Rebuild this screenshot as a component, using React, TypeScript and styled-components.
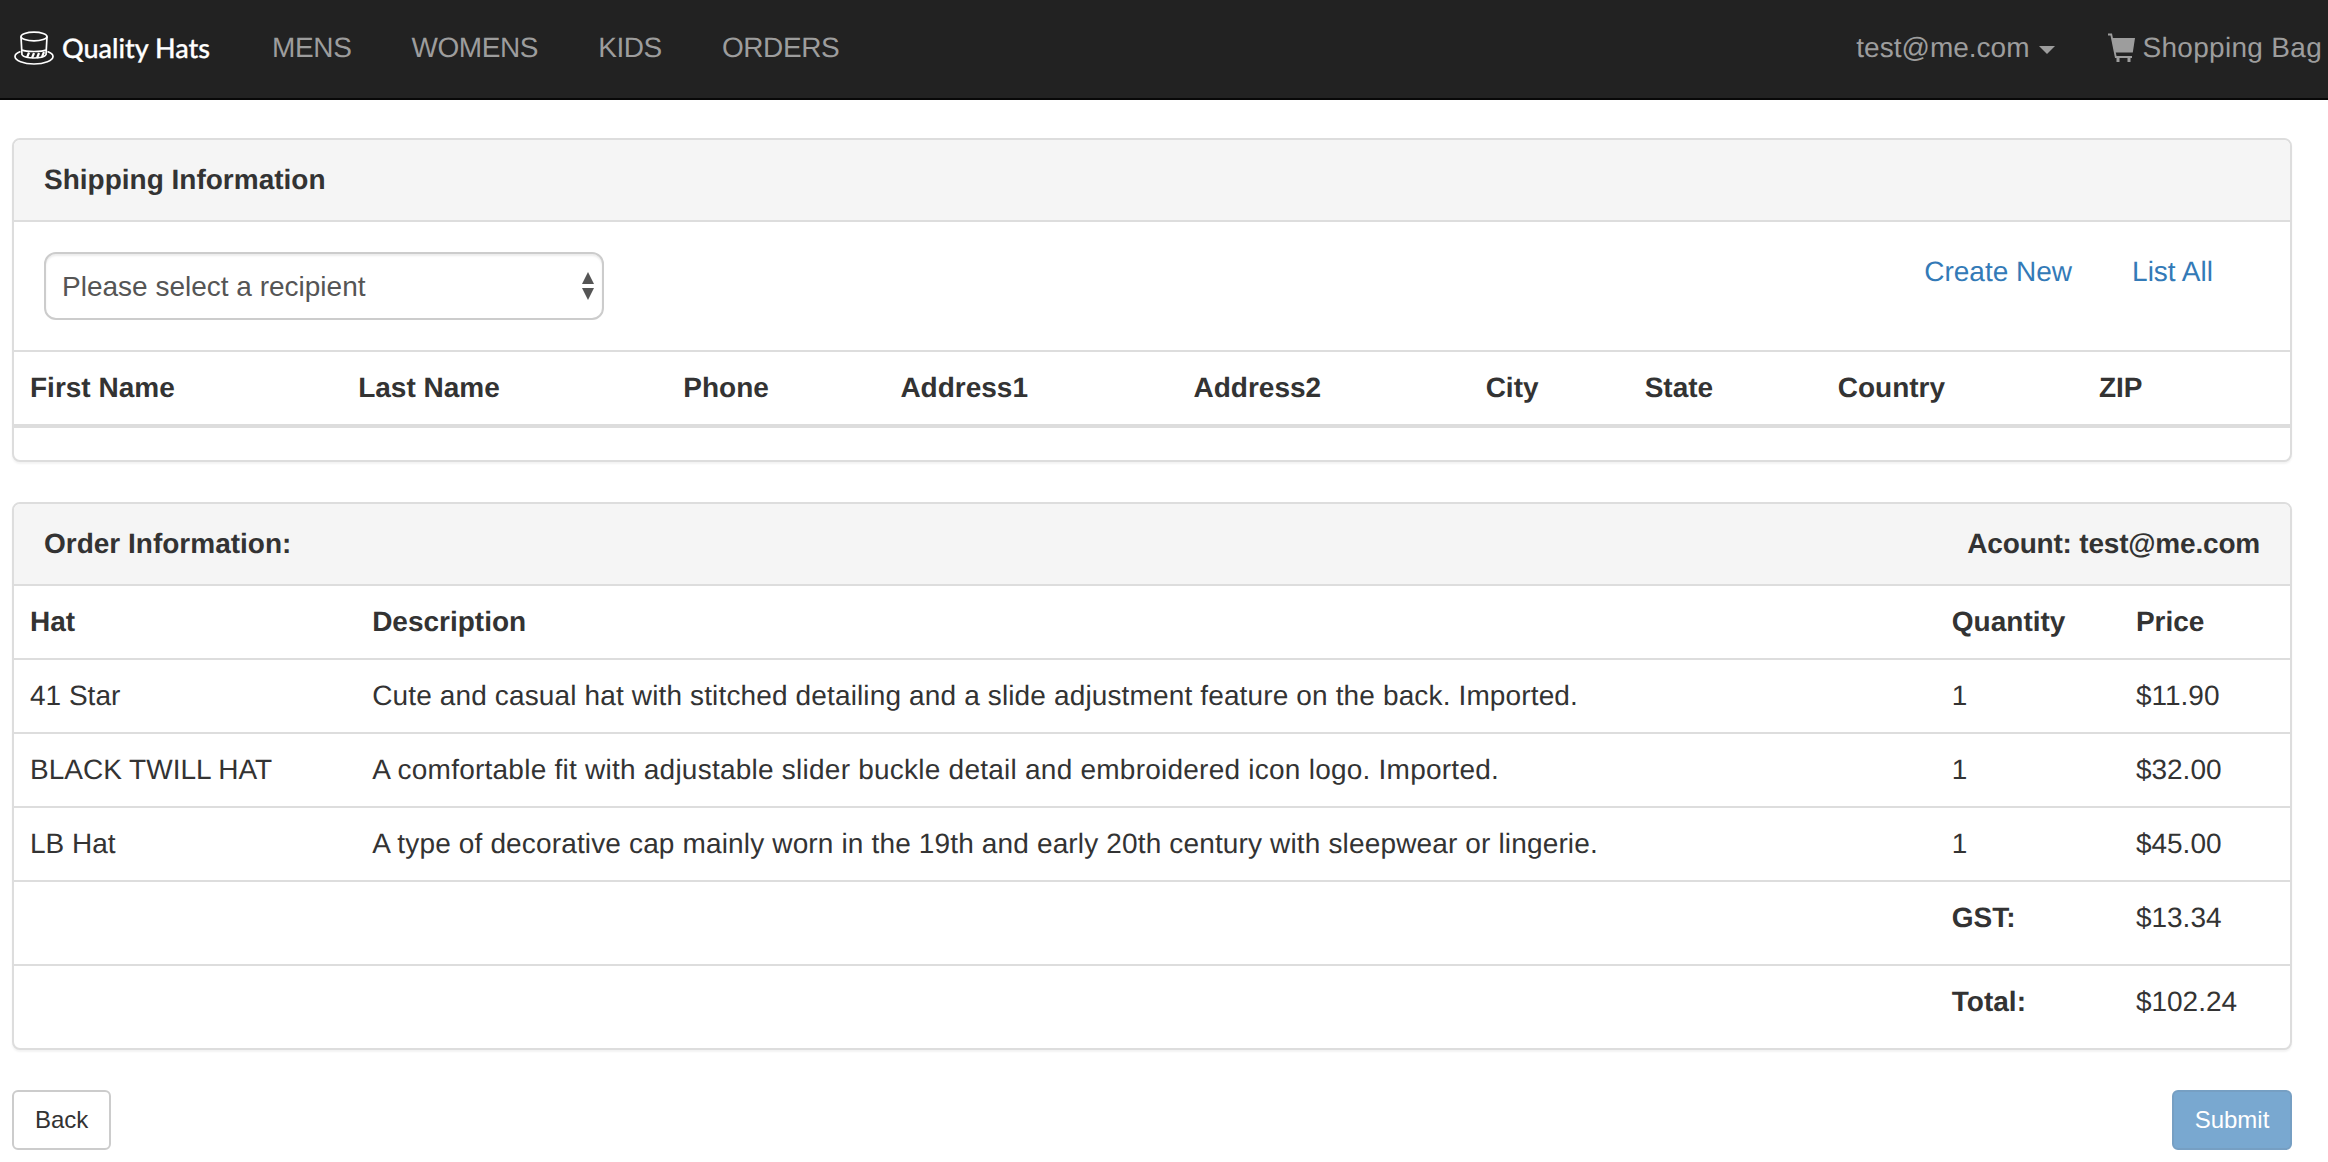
import React from "react";
import styled, { createGlobalStyle } from "styled-components";

const GlobalStyle = createGlobalStyle`
  html, body {
    margin: 0;
    padding: 0;
    background: #fff;
    color: #333;
    font-family: "Liberation Sans", Arial, sans-serif;
    font-size: 28px;
    line-height: 40px;
    text-rendering: geometricPrecision;
  }
  * {
    box-sizing: border-box;
  }
`;

const shippingColumns = [
  { label: "First Name", width: 328 },
  { label: "Last Name", width: 325 },
  { label: "Phone", width: 217 },
  { label: "Address1", width: 293 },
  { label: "Address2", width: 292 },
  { label: "City", width: 159 },
  { label: "State", width: 193 },
  { label: "Country", width: 261 },
  { label: "ZIP", width: 207 },
];

const orderColumns = [
  { label: "Hat", width: 342 },
  { label: "Description", width: 1579 },
  { label: "Quantity", width: 184 },
  { label: "Price", width: 170 },
];

const orderItems = [
  {
    hat: "41 Star",
    description:
      "Cute and casual hat with stitched detailing and a slide adjustment feature on the back. Imported.",
    tracking: 0.14,
    quantity: 1,
    price: "$11.90",
  },
  {
    hat: "BLACK TWILL HAT",
    description:
      "A comfortable fit with adjustable slider buckle detail and embroidered icon logo. Imported.",
    tracking: 0.24,
    quantity: 1,
    price: "$32.00",
  },
  {
    hat: "LB Hat",
    description:
      "A type of decorative cap mainly worn in the 19th and early 20th century with sleepwear or lingerie.",
    tracking: 0.15,
    quantity: 1,
    price: "$45.00",
  },
];

const HatIcon = () => (
  <svg width="40" height="34" viewBox="0 0 40 34" fill="none" stroke="#fff" strokeWidth="1.7">
    <path d="M7 5.5 L8 24 M33 5.5 L32 24" />
    <ellipse cx="20" cy="5.5" rx="13" ry="4.3" />
    <path d="M6.5 20.5 C2.5 22 1 23.5 1 25.5 C1 29.5 9.5 33 20 33 C30.5 33 39 29.5 39 25.5 C39 23.5 37.5 22 33.5 20.5" />
    <path d="M8 24 C12 28 28 28 32 24" />
    <path d="M8 19 C12 21 28 21 32 19" />
    <path d="M13 26.5 L15 21.5 M18 27 L20 22 M23 27 L25 22 M28 26 L30 21" strokeWidth="2.2" />
  </svg>
);

const CartIcon = () => (
  <svg width="30" height="30" viewBox="0 0 30 30" fill="#9d9d9d">
    <path d="M1 0.5 H5 L9.5 23 H25 V25 H8 L3.5 2.5 H1 Z" />
    <path d="M4.8 5 H28 L25.8 19.5 H8 Z" />
    <rect x="9.5" y="25" width="3" height="4" />
    <rect x="20.5" y="25" width="3" height="4" />
  </svg>
);

const SelectArrows = () => (
  <svg width="12" height="28" viewBox="0 0 12 28" fill="#555">
    <path d="M6 0 L12 12 H0 Z" />
    <path d="M0 16 H12 L6 28 Z" />
  </svg>
);

export default function App() {
  return (
    <>
      <GlobalStyle />
      <Navbar>
        <Brand>
          <HatIcon />
          <BrandName>Quality Hats</BrandName>
        </Brand>
        <NavLinks>
          <MenuLink>MENS</MenuLink>
          <MenuLink>WOMENS</MenuLink>
          <MenuLink>KIDS</MenuLink>
          <MenuLink>ORDERS</MenuLink>
        </NavLinks>
        <NavRight>
          <NavLink>
            test@me.com
            <Caret />
          </NavLink>
          <BagLink>
            <CartIcon />
            <BagLabel>Shopping Bag</BagLabel>
          </BagLink>
        </NavRight>
      </Navbar>

      <Content>
        <Panel>
          <PanelHeading>Shipping Information</PanelHeading>
          <RecipientRow>
            <SelectWrap>
              <RecipientSelect defaultValue="">
                <option value="">Please select a recipient</option>
              </RecipientSelect>
              <ArrowSlot>
                <SelectArrows />
              </ArrowSlot>
            </SelectWrap>
            <RecipientLinks>
              <TextLink href="#">Create New</TextLink>
              <TextLink href="#">List All</TextLink>
            </RecipientLinks>
          </RecipientRow>
          <DataTable $emptyBody>
            <colgroup>
              {shippingColumns.map((col) => (
                <col key={col.label} width={col.width} />
              ))}
            </colgroup>
            <thead>
              <tr>
                {shippingColumns.map((col) => (
                  <ShippingHead key={col.label}>{col.label}</ShippingHead>
                ))}
              </tr>
            </thead>
          </DataTable>
        </Panel>

        <OrderPanel>
          <PanelHeading>
            <span>Order Information:</span>
            <AccountLabel>Acount: test@me.com</AccountLabel>
          </PanelHeading>
          <DataTable>
            <colgroup>
              {orderColumns.map((col) => (
                <col key={col.label} width={col.width} />
              ))}
            </colgroup>
            <thead>
              <tr>
                {orderColumns.map((col) => (
                  <OrderHead key={col.label}>{col.label}</OrderHead>
                ))}
              </tr>
            </thead>
            <tbody>
              {orderItems.map((item) => (
                <tr key={item.hat}>
                  <Cell>{item.hat}</Cell>
                  <DescriptionCell $tracking={item.tracking}>{item.description}</DescriptionCell>
                  <Cell>{item.quantity}</Cell>
                  <Cell>{item.price}</Cell>
                </tr>
              ))}
              <tr>
                <SummaryCell colSpan={2} />
                <SummaryCell>
                  <strong>GST:</strong>
                </SummaryCell>
                <SummaryCell>$13.34</SummaryCell>
              </tr>
              <tr>
                <SummaryCell $last colSpan={2} />
                <SummaryCell $last>
                  <strong>Total:</strong>
                </SummaryCell>
                <SummaryCell $last>$102.24</SummaryCell>
              </tr>
            </tbody>
          </DataTable>
        </OrderPanel>

        <Actions>
          <BackButton>Back</BackButton>
          <SubmitButton disabled>Submit</SubmitButton>
        </Actions>
      </Content>
    </>
  );
}

const Navbar = styled.nav`
  height: 100px;
  display: flex;
  align-items: center;
  padding: 0 6px 3px 14px;
  background: #222;
  border-bottom: 2px solid #080808;
`;

const Brand = styled.div`
  display: flex;
  align-items: center;
  gap: 8px;
  margin-right: 32px;
  color: #fff;
`;

const BrandName = styled.span`
  font-family: Lato, "Liberation Sans", sans-serif;
  font-size: 27px;
  font-weight: 500;
  -webkit-text-stroke: 0.3px #fff;
`;

const NavLinks = styled.div`
  display: flex;
`;

const NavLink = styled.a`
  display: flex;
  align-items: center;
  padding: 0 30px;
  color: #9d9d9d;
`;

const MenuLink = styled(NavLink)`
  letter-spacing: -0.4px;
`;

const Caret = styled.span`
  width: 0;
  height: 0;
  margin-left: 10px;
  margin-top: 4px;
  border-top: 8px solid #9d9d9d;
  border-left: 8px solid transparent;
  border-right: 8px solid transparent;
`;

const NavRight = styled.div`
  display: flex;
  align-items: center;
  margin-left: auto;
`;

const BagLink = styled.a`
  display: flex;
  align-items: center;
  gap: 5px;
  padding-left: 22px;
  color: #9d9d9d;
`;

const BagLabel = styled.span`
  letter-spacing: 0.3px;
`;

const Content = styled.main`
  padding: 38px 36px 0 12px;
`;

const Panel = styled.section`
  background: #fff;
  border: 2px solid #ddd;
  border-radius: 8px;
  box-shadow: 0 2px 2px rgba(0, 0, 0, 0.05);
  overflow: hidden;
`;

const OrderPanel = styled(Panel)`
  margin-top: 40px;
`;

const PanelHeading = styled.header`
  height: 82px;
  display: flex;
  align-items: center;
  justify-content: space-between;
  padding: 0 30px;
  background: #f5f5f5;
  border-bottom: 2px solid #ddd;
  font-weight: 700;
`;

const AccountLabel = styled.span`
  letter-spacing: -0.2px;
`;

const RecipientRow = styled.div`
  display: flex;
  justify-content: space-between;
  align-items: flex-start;
  padding: 30px 77px 30px 30px;
`;

const SelectWrap = styled.div`
  position: relative;
  width: 560px;
`;

const RecipientSelect = styled.select`
  appearance: none;
  display: block;
  width: 100%;
  height: 68px;
  padding: 0 16px;
  background: #fff;
  border: 2px solid #ccc;
  border-radius: 12px;
  box-shadow: inset 0 2px 2px rgba(0, 0, 0, 0.075);
  color: #555;
  font-family: inherit;
  font-size: 28px;
`;

const ArrowSlot = styled.span`
  position: absolute;
  top: 20px;
  right: 10px;
  display: flex;
`;

const RecipientLinks = styled.div`
  display: flex;
  gap: 60px;
`;

const TextLink = styled.a`
  color: #337ab7;
  text-decoration: none;
`;

const DataTable = styled.table<{ $emptyBody?: boolean }>`
  width: 100%;
  table-layout: fixed;
  border-collapse: separate;
  border-spacing: 0;
  margin-bottom: ${(p) => (p.$emptyBody ? "32px" : "0")};
`;

const OrderHead = styled.th`
  padding: 16px;
  text-align: left;
  font-weight: 700;
  border-bottom: 2px solid #ddd;
`;

const ShippingHead = styled(OrderHead)`
  border-top: 2px solid #ddd;
  border-bottom-width: 4px;
`;

const Cell = styled.td`
  padding: 16px;
  border-bottom: 2px solid #ddd;
`;

const DescriptionCell = styled(Cell)<{ $tracking: number }>`
  letter-spacing: ${(p) => p.$tracking}px;
`;

const SummaryCell = styled.td<{ $last?: boolean }>`
  padding: 16px 16px 26px;
  border-bottom: ${(p) => (p.$last ? "none" : "2px solid #ddd")};
`;

const Actions = styled.div`
  display: flex;
  justify-content: space-between;
  margin-top: 40px;
`;

const BackButton = styled.button`
  height: 60px;
  padding: 0 21px;
  background: #fff;
  border: 2px solid #ccc;
  border-radius: 6px;
  color: #333;
  font-family: inherit;
  font-size: 24px;
`;

const SubmitButton = styled(BackButton)`
  width: 120px;
  padding: 0;
  background: #337ab7;
  border-color: #2e6da4;
  color: #fff;
  opacity: 0.65;
`;
